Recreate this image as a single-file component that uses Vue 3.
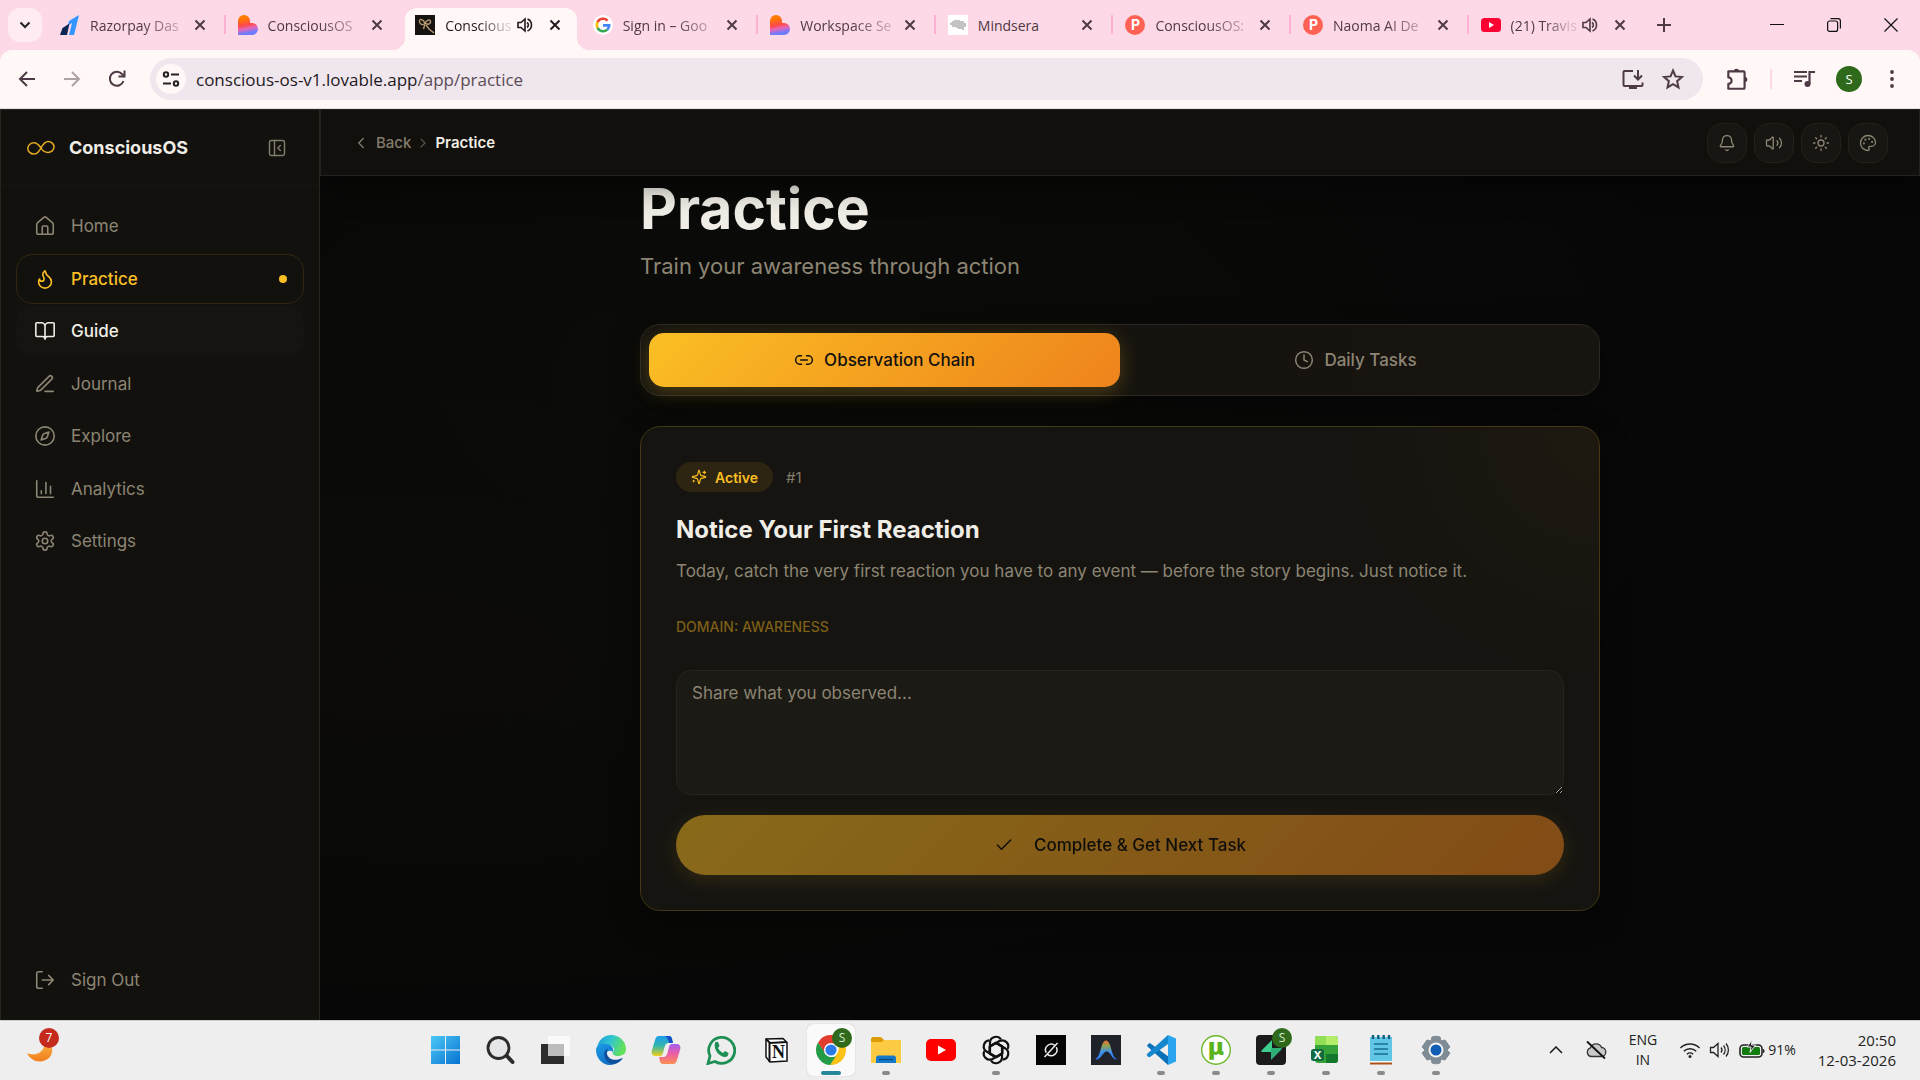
<template>
  <div class="desktop">
    <!-- browser window -->
    <header class="browser">
      <div class="tab-strip">
        <button class="tab-search" aria-label="Search tabs">
          <svg width="12" height="12" viewBox="0 0 12 12" fill="none" stroke="currentColor" stroke-width="2"><path d="M1.5 3.5 6 8l4.5-4.5" /></svg>
        </button>
        <div class="tabs">
          <div
            v-for="(tab, i) in tabs"
            :key="i"
            class="tab"
            :class="{ active: i === activeTab, divided: i !== activeTab && i !== activeTab + 1 && i > 0 }"
            @click="activeTab = i"
          >
            <svg class="favicon" width="20" height="20" viewBox="0 0 20 20" v-html="favicons[tab.icon]" />
            <span class="tab-title" :class="{ faded: tab.title !== 'Mindsera' }">{{ tab.title }}</span>
            <svg v-if="tab.audio" class="tab-audio" width="16" height="16" viewBox="0 0 16 16" v-html="glyphs.audio" />
            <button class="tab-close" aria-label="Close tab">
              <svg width="12" height="12" viewBox="0 0 12 12" stroke="currentColor" stroke-width="2"><path d="m1.5 1.5 9 9m0-9-9 9" /></svg>
            </button>
          </div>
        </div>
        <button class="new-tab" aria-label="New tab">
          <svg width="14" height="14" viewBox="0 0 14 14" stroke="currentColor" stroke-width="2"><path d="M7 0v14M0 7h14" /></svg>
        </button>
        <div class="window-controls">
          <button aria-label="Minimize"><svg width="14" height="14" viewBox="0 0 14 14" fill="none" stroke="#111"><path d="M0 6.5h14" /></svg></button>
          <button aria-label="Restore"><svg width="14" height="14" viewBox="0 0 14 14" fill="none" stroke="#111" stroke-width="1.2"><rect x=".6" y="3" width="10" height="10.4" rx="2" /><path d="M3.5.6H11a2.4 2.4 0 0 1 2.4 2.4v7.5" /></svg></button>
          <button aria-label="Close"><svg width="14" height="14" viewBox="0 0 14 14" fill="none" stroke="#111" stroke-width="1.2"><path d="m.5.5 13 13m0-13-13 13" /></svg></button>
        </div>
      </div>

      <div class="toolbar">
        <button class="tool" aria-label="Back"><svg width="20" height="20" viewBox="0 0 20 20" v-html="glyphs.back" /></button>
        <button class="tool faded" aria-label="Forward"><svg width="20" height="20" viewBox="0 0 20 20" v-html="glyphs.forward" /></button>
        <button class="tool" aria-label="Reload"><svg width="20" height="20" viewBox="0 0 20 20" v-html="glyphs.reload" /></button>
        <div class="address">
          <button class="site-info" aria-label="Site information"><svg width="18" height="18" viewBox="0 0 18 18" v-html="glyphs.tune" /></button>
          <a class="url" href="#"><span>conscious-os-v1.lovable.app</span>/app/practice</a>
          <button class="tool-sm" aria-label="Install"><svg width="24" height="24" viewBox="0 0 24 24" v-html="glyphs.install" /></button>
          <button class="tool-sm" aria-label="Bookmark"><svg width="24" height="24" viewBox="0 0 24 24" v-html="glyphs.star" /></button>
        </div>
        <div class="tool-group">
          <button class="tool" aria-label="Extensions"><svg width="26" height="26" viewBox="0 0 24 24" v-html="glyphs.puzzle" /></button>
          <span class="tool-divider" />
          <button class="tool" aria-label="Media"><svg width="24" height="24" viewBox="0 0 24 24" v-html="glyphs.media" /></button>
          <button class="profile">S</button>
          <button class="tool" aria-label="Menu"><svg width="20" height="20" viewBox="0 0 20 20" v-html="glyphs.dots" /></button>
        </div>
      </div>
    </header>

    <!-- app -->
    <div class="app">
      <aside class="sidebar">
        <div class="brand">
          <svg width="28" height="16" viewBox="0 0 28 16" fill="none" stroke="#e5ab1f" stroke-width="1.5">
            <path d="M14 8C11.500 4.500 10 2.800 7 2.800A6 5.400 0 0 0 7 14C10.500 14 12 11.500 14 8S17.500 1.500 21 1.500A6 5.500 0 0 1 21 12.500C18 12.500 16 11.500 14 8Z" />
          </svg>
          <strong>ConsciousOS</strong>
          <button aria-label="Collapse sidebar">
            <svg class="line" width="20" height="20" viewBox="0 0 24 24" v-html="glyphs.panel" />
          </button>
        </div>
        <nav class="nav">
          <a
            v-for="item in navItems"
            :key="item.name"
            href="#"
            class="nav-item"
            :class="{ current: item.name === 'Practice', hovered: item.name === 'Guide' }"
          >
            <svg class="line" width="22" height="22" viewBox="0 0 24 24" v-html="glyphs[item.icon]" />
            <span>{{ item.name }}</span>
            <i v-if="item.name === 'Practice'" class="dot" />
          </a>
        </nav>
        <a href="#" class="nav-item sign-out">
          <svg class="line" width="22" height="22" viewBox="0 0 24 24" v-html="glyphs.logout" />
          <span>Sign Out</span>
        </a>
      </aside>

      <div class="page">
        <div class="page-header">
          <nav class="crumbs">
            <a href="#"><svg class="line" width="18" height="18" viewBox="0 0 24 24"><path d="m15 18-6-6 6-6" /></svg>Back</a>
            <svg class="line crumb-sep" width="16" height="16" viewBox="0 0 24 24"><path d="m9 18 6-6-6-6" /></svg>
            <b>Practice</b>
          </nav>
          <div class="actions">
            <button v-for="a in actions" :key="a" :aria-label="a">
              <svg class="line" width="18" height="18" viewBox="0 0 24 24" v-html="glyphs[a]" />
            </button>
          </div>
        </div>

        <main class="content">
          <h1>Practice</h1>
          <p class="subtitle">Train your awareness through action</p>

          <div class="switcher">
            <button :class="{ on: mode === 'chain' }" @click="mode = 'chain'">
              <svg class="line" width="20" height="20" viewBox="0 0 24 24" v-html="glyphs.link" />Observation Chain
            </button>
            <button :class="{ on: mode === 'daily' }" @click="mode = 'daily'">
              <svg class="line" width="20" height="20" viewBox="0 0 24 24" v-html="glyphs.clock" />Daily Tasks
            </button>
          </div>

          <section class="card">
            <div class="card-meta">
              <span class="badge"><svg class="line" width="16" height="16" viewBox="0 0 24 24" v-html="glyphs.sparkles" />Active</span>
              <span class="number">#1</span>
            </div>
            <h2>Notice Your First Reaction</h2>
            <p class="description">Today, catch the very first reaction you have to any event — before the story begins. Just notice it.</p>
            <p class="domain">DOMAIN: AWARENESS</p>
            <textarea v-model="note" aria-label="Observation" placeholder="Share what you observed..." />
            <button class="complete" :disabled="!note">
              <svg class="line" width="20" height="20" viewBox="0 0 24 24"><path d="M20 6 9 17l-5-5" /></svg>
              Complete &amp; Get Next Task
            </button>
          </section>
        </main>
      </div>
    </div>

    <!-- taskbar -->
    <footer class="taskbar">
      <div class="widgets">
        <button class="weather" aria-label="Weather">
          <svg width="32" height="32" viewBox="0 0 32 32"><defs><linearGradient id="moon" x1="0" y1="0" x2="0" y2="1"><stop stop-color="#ffc04a" /><stop offset="1" stop-color="#ef7d1c" /></linearGradient></defs><path d="M19 4c10 6 10 15 5 20-7 6-18 4-22-5 7 3 13 1 16-4 2-4 2-7 1-11Z" fill="url(#moon)" /></svg>
          <span>7</span>
        </button>
      </div>
      <div class="pinned">
        <button
          v-for="p in pinned"
          :key="p.name"
          class="pin"
          :class="{ running: p.running, focused: p.name === 'chrome' }"
          :aria-label="p.name"
        >
          <svg width="30" height="30" viewBox="0 0 30 30" v-html="programs[p.name]" />
          <span v-if="p.badge" class="pin-badge">S</span>
        </button>
      </div>
      <div class="tray">
        <svg width="14" height="8" viewBox="0 0 14 8" fill="none" stroke="#222" stroke-width="1.600"><path d="m1 7 6-6 6 6" /></svg>
        <svg width="22" height="20" viewBox="0 0 22 20" fill="none" stroke="#333" stroke-width="1.300"><path d="M6 16.500h10a4.500 4.500 0 0 0 .6-9A6 6 0 0 0 5.500 7.800 4.500 4.500 0 0 0 6 16.500Z" fill="#c9c9c9" /><path d="m2 1.500 18 17" stroke="#111" stroke-width="1.800" /></svg>
        <div class="language"><span>ENG</span><span>IN</span></div>
        <div class="status">
          <svg width="22" height="18" viewBox="0 0 22 18" fill="none" stroke="#222" stroke-width="1.500"><path d="M1.500 7a13.500 13.500 0 0 1 19 0M4.800 10.200a8.800 8.800 0 0 1 12.400 0M8 13.200a4.300 4.300 0 0 1 6 0" /><circle cx="11" cy="15.500" r="1.500" fill="#222" stroke="none" /></svg>
          <svg width="22" height="18" viewBox="0 0 22 18" fill="none" stroke="#222" stroke-width="1.300"><path d="M1.500 6.500h3L9 2.500v13l-4.500-4h-3ZM12 6.500a4 4 0 0 1 0 5M14.500 4.500a7 7 0 0 1 0 9M17 2.500a10 10 0 0 1 0 13" /></svg>
          <div class="battery">
            <svg width="26" height="20" viewBox="0 0 26 20" fill="none"><rect x="1" y="5" width="22" height="12" rx="3.500" stroke="#222" stroke-width="1.600" /><rect x="3" y="7" width="18" height="8" rx="1.500" fill="#107c10" /><path d="M24 9c2 0 2 4 0 4Z" fill="#222" /><path d="M13 0 8 7h4l-1 5.500L16.500 5h-4Z" fill="#222" stroke="#eee" /></svg>
            <span>91%</span>
          </div>
        </div>
        <div class="clock"><span>20:50</span><span>12-03-2026</span></div>
      </div>
    </footer>
  </div>
</template>

<script setup>
import { ref } from 'vue'

const activeTab = ref(2)
const mode = ref('chain')
const note = ref('')

const tabs = [
  { icon: 'razorpay', title: 'Razorpay Das' },
  { icon: 'lovable', title: 'ConsciousOS' },
  { icon: 'conscious', title: 'Conscious', audio: true },
  { icon: 'google', title: 'Sign in – Goo' },
  { icon: 'lovable', title: 'Workspace Se' },
  { icon: 'mindsera', title: 'Mindsera' },
  { icon: 'producthunt', title: 'ConsciousOS:' },
  { icon: 'producthunt', title: 'Naoma AI De' },
  { icon: 'youtube', title: '(21) Travis', audio: true },
]

const navItems = [
  { name: 'Home', icon: 'home' },
  { name: 'Practice', icon: 'flame' },
  { name: 'Guide', icon: 'book' },
  { name: 'Journal', icon: 'pen' },
  { name: 'Explore', icon: 'compass' },
  { name: 'Analytics', icon: 'chart' },
  { name: 'Settings', icon: 'gear' },
]

const actions = ['bell', 'volume', 'sun', 'palette']

const pinned = [
  { name: 'windows' },
  { name: 'search' },
  { name: 'taskview' },
  { name: 'edge' },
  { name: 'copilot' },
  { name: 'whatsapp' },
  { name: 'notion' },
  { name: 'chrome', running: true, badge: true },
  { name: 'explorer', running: true },
  { name: 'youtube' },
  { name: 'chatgpt', running: true },
  { name: 'grok' },
  { name: 'antigravity' },
  { name: 'vscode', running: true },
  { name: 'utorrent', running: true },
  { name: 'supabase', running: true, badge: true },
  { name: 'excel', running: true },
  { name: 'notepad', running: true },
  { name: 'settings', running: true },
]

const heart = '<defs><linearGradient id="lov" x1=".3" y1="0" x2=".5" y2="1"><stop offset=".15" stop-color="#ff7a00"/><stop offset=".5" stop-color="#ff4a4a"/><stop offset=".68" stop-color="#e566b8"/><stop offset=".9" stop-color="#6f7bff"/></linearGradient></defs><path d="M0 6a6 6 0 0 1 12 0v2h2a6 6 0 0 1 0 12H0Z" fill="url(#lov)"/>'
const hunt = '<circle cx="10" cy="10" r="10" fill="#ff6154"/><text x="10.500" y="15" text-anchor="middle" font-family="Inter, sans-serif" font-size="14" font-weight="700" fill="#fff">P</text>'

const favicons = {
  razorpay: '<path d="M9 6 19 0l-5 20h-5l3-12-4 2.500Z" fill="#3395ff"/><path d="m2.500 13 7-4.500L7 20H0Z" fill="#072654"/>',
  lovable: heart,
  conscious: '<path d="M0 0h20v20H0Z" fill="#15120f"/><path d="M10 9C9 4 4 3 4.500 6.500s4 4 5.500 1.500 5-4.500 5.500-1.500-4.500 4-5.500.5M10 9l-1.500 5M11 10l3 4 5 4" fill="none" stroke="#b99a72" stroke-width="1.400"/>',
  google: '<circle cx="10" cy="10" r="10" fill="#fff"/><g fill="none" stroke-width="2.600"><path d="M14.600 5.600A6.300 6.300 0 0 0 4.500 7.200" stroke="#ea4335"/><path d="M4.500 7.200a6.300 6.300 0 0 0 0 5.600" stroke="#fbbc05"/><path d="M4.500 12.800a6.300 6.300 0 0 0 9.700 2" stroke="#34a853"/><path d="M14.200 14.800a6.300 6.300 0 0 0 2-4.400H10" stroke="#4285f4"/></g>',
  mindsera: '<path d="M0 0h20v20H0Z" fill="#fff"/><path d="M3 10V7.500M5 12V6M7 12V5M9 13V5M11 14V5M13 14V6M15 15V6M17 12V8" stroke="#b9b9b9" stroke-width="1.700"/>',
  producthunt: hunt,
  youtube: '<rect y="3" width="20" height="14" rx="3.500" fill="#ff0033"/><path d="m8 7 5 3-5 3Z" fill="#fff"/>',
}

const line = 'fill="none" stroke="currentColor" stroke-width="2"'

const glyphs = {
  audio: '<path d="M1 5.500h3L8 2v12l-4-3.500H1Z" fill="none" stroke="currentColor" stroke-width="1.600"/><path d="M10 5.500a3 3 0 0 1 0 5M10.500 2a6.500 6.500 0 0 1 0 12" fill="none" stroke="currentColor" stroke-width="1.600"/>',
  back: `<path d="M18 10H3m7-7-7 7 7 7" ${line}/>`,
  forward: `<path d="M2 10h15m-7-7 7 7-7 7" ${line}/>`,
  reload: `<path d="M16.500 12A7 7 0 1 1 15 5l2 2" ${line}/><path d="M17.500 1.500v6h-6" ${line}/>`,
  tune: `<g ${line}><circle cx="4" cy="4.500" r="2.200"/><path d="M9 4.500h8M1 13.500h8"/><circle cx="14" cy="13.500" r="2.200"/></g>`,
  install: `<path d="M12 4H3.500a1 1 0 0 0-1 1v13a1 1 0 0 0 1 1h17a1 1 0 0 0 1-1v-2.500M17 3v9m-4-3.500 4 4 4-4" ${line}/><path d="M8 19h8v3H8Z" fill="currentColor"/>`,
  star: `<path d="m12 3.500 2.500 5.900 6.400.6-4.800 4.200 1.400 6.200-5.500-3.300-5.500 3.300 1.400-6.200L3.100 10l6.400-.6Z" ${line}/>`,
  puzzle: `<path d="M4 5h14a1 1 0 0 1 1 1v14a1 1 0 0 1-1 1H4v-4.500a3 3 0 0 0 0-6Z" ${line} stroke-linejoin="round"/><path d="M9 5a2.500 2.500 0 0 1 5 0ZM19 10a2.500 2.500 0 0 1 0 5Z" fill="currentColor"/>`,
  media: '<path d="M2 5h13M2 9.500h13M2 14h8M17.500 17V5H23" fill="none" stroke="currentColor" stroke-width="2.200"/><circle cx="15.500" cy="17" r="3" fill="currentColor"/>',
  dots: '<g fill="currentColor"><circle cx="10" cy="3" r="1.900"/><circle cx="10" cy="10" r="1.900"/><circle cx="10" cy="17" r="1.900"/></g>',
  panel: '<rect x="3" y="3" width="18" height="18" rx="2"/><path d="M9 3v18m7-6-3-3 3-3"/>',
  home: '<path d="M15 21v-8a1 1 0 0 0-1-1h-4a1 1 0 0 0-1 1v8"/><path d="M3 10a2 2 0 0 1 .709-1.528l7-5.999a2 2 0 0 1 2.582 0l7 5.999A2 2 0 0 1 21 10v9a2 2 0 0 1-2 2H5a2 2 0 0 1-2-2z"/>',
  flame: '<path d="M8.500 14.500A2.500 2.500 0 0 0 11 12c0-1.380-.5-2-1-3-1.072-2.143-.224-4.054 2-6 .5 2.500 2 4.900 4 6.500 2 1.600 3 3.500 3 5.500a7 7 0 1 1-14 0c0-1.153.433-2.294 1-3a2.500 2.500 0 0 0 2.500 2.500z"/>',
  book: '<path d="M12 7v14M3 18a1 1 0 0 1-1-1V4a1 1 0 0 1 1-1h5a4 4 0 0 1 4 4 4 4 0 0 1 4-4h5a1 1 0 0 1 1 1v13a1 1 0 0 1-1 1h-6a3 3 0 0 0-3 3 3 3 0 0 0-3-3z"/>',
  pen: '<path d="M12 20h9M16.376 3.622a1 1 0 0 1 3.002 3.002L7.368 18.635a2 2 0 0 1-.855.506l-2.872.838a.5.5 0 0 1-.62-.62l.838-2.872a2 2 0 0 1 .506-.854z"/>',
  compass: '<path d="m16.240 7.760-1.804 5.411a2 2 0 0 1-1.265 1.265L7.760 16.240l1.804-5.411a2 2 0 0 1 1.265-1.265z"/><circle cx="12" cy="12" r="10"/>',
  chart: '<path d="M3 3v16a2 2 0 0 0 2 2h16M18 17V9M13 17V5M8 17v-3"/>',
  gear: '<path d="M12.220 2h-.44a2 2 0 0 0-2 2v.18a2 2 0 0 1-1 1.730l-.43.25a2 2 0 0 1-2 0l-.15-.08a2 2 0 0 0-2.730.73l-.22.38a2 2 0 0 0 .73 2.730l.15.1a2 2 0 0 1 1 1.720v.51a2 2 0 0 1-1 1.740l-.15.09a2 2 0 0 0-.73 2.730l.22.38a2 2 0 0 0 2.730.73l.15-.08a2 2 0 0 1 2 0l.43.25a2 2 0 0 1 1 1.730V20a2 2 0 0 0 2 2h.44a2 2 0 0 0 2-2v-.18a2 2 0 0 1 1-1.730l.43-.25a2 2 0 0 1 2 0l.15.08a2 2 0 0 0 2.730-.73l.22-.39a2 2 0 0 0-.73-2.730l-.15-.08a2 2 0 0 1-1-1.740v-.5a2 2 0 0 1 1-1.740l.15-.09a2 2 0 0 0 .73-2.730l-.22-.38a2 2 0 0 0-2.730-.73l-.15.08a2 2 0 0 1-2 0l-.43-.25a2 2 0 0 1-1-1.730V4a2 2 0 0 0-2-2z"/><circle cx="12" cy="12" r="3"/>',
  logout: '<path d="M9 21H5a2 2 0 0 1-2-2V5a2 2 0 0 1 2-2h4M16 17l5-5-5-5M21 12H9"/>',
  bell: '<path d="M10.300 21a1.940 1.940 0 0 0 3.400 0M3.262 15.326A1 1 0 0 0 4 17h16a1 1 0 0 0 .740-1.673C19.410 13.956 18 12.499 18 8A6 6 0 0 0 6 8c0 4.499-1.411 5.956-2.738 7.326"/>',
  volume: '<path d="M11 4.702a.705.705 0 0 0-1.203-.498L6.413 7.587A1.400 1.400 0 0 1 5.416 8H3a1 1 0 0 0-1 1v6a1 1 0 0 0 1 1h2.416a1.400 1.400 0 0 1 .997.413l3.383 3.384A.705.705 0 0 0 11 19.298zM16 9a5 5 0 0 1 0 6M19.364 18.364a9 9 0 0 0 0-12.728"/>',
  sun: '<circle cx="12" cy="12" r="4"/><path d="M12 2v2M12 20v2M4.930 4.930l1.410 1.410M17.660 17.660l1.410 1.410M2 12h2M20 12h2M6.340 17.660l-1.410 1.410M19.070 4.930l-1.410 1.410"/>',
  palette: '<g fill="currentColor"><circle cx="13.500" cy="6.500" r=".5"/><circle cx="17.500" cy="10.500" r=".5"/><circle cx="8.500" cy="7.500" r=".5"/><circle cx="6.500" cy="12.500" r=".5"/></g><path d="M12 2C6.500 2 2 6.500 2 12s4.500 10 10 10c.926 0 1.648-.746 1.648-1.688 0-.437-.18-.835-.437-1.125-.29-.289-.438-.652-.438-1.125a1.640 1.640 0 0 1 1.668-1.668h1.996c3.051 0 5.555-2.503 5.555-5.554C21.965 6.012 17.461 2 12 2z"/>',
  link: '<path d="M9 17H7A5 5 0 0 1 7 7h2M15 7h2a5 5 0 1 1 0 10h-2M8 12h8"/>',
  clock: '<circle cx="12" cy="12" r="10"/><path d="M12 6v6l4 2"/>',
  sparkles: '<path d="M9.937 15.500A2 2 0 0 0 8.500 14.063l-6.135-1.582a.5.5 0 0 1 0-.962L8.500 9.936A2 2 0 0 0 9.937 8.500l1.582-6.135a.5.5 0 0 1 .963 0L14.063 8.500A2 2 0 0 0 15.500 9.937l6.135 1.581a.5.5 0 0 1 0 .964L15.500 14.063a2 2 0 0 0-1.437 1.437l-1.582 6.135a.5.5 0 0 1-.963 0zM20 3v4M22 5h-4M4 17v2M5 18H3"/>',
}

const programs = {
  windows: '<defs><linearGradient id="win" x1="0" y1="0" x2="1" y2="1"><stop stop-color="#4cc9f8"/><stop offset="1" stop-color="#0672d0"/></linearGradient></defs><path d="M0 1h14v13.500H0ZM15 1h14v13.500H15ZM0 15.500h14V29H0ZM15 15.500h14V29H15Z" fill="url(#win)"/>',
  search: '<circle cx="12.500" cy="13" r="10.500" fill="#e4e6e8" stroke="#2b2b2b" stroke-width="2.800"/><path d="m21 21 5.500 6" stroke="#2b2b2b" stroke-width="4" stroke-linecap="round"/>',
  taskview: '<path d="M0 9h23v20H0Z" fill="#2c2c2c"/><path d="M7 1h22v20H7Z" fill="#fafafa"/><path d="M7 9h16v12H7Z" fill="#bdbdbd"/>',
  edge: '<defs><linearGradient id="ed1" x1="0" y1="0" x2="1" y2=".3"><stop stop-color="#1c96d8"/><stop offset=".5" stop-color="#31c5d3"/><stop offset="1" stop-color="#62e05a"/></linearGradient><linearGradient id="ed2" x1="0" y1="0" x2="1" y2="1"><stop stop-color="#1c9ee8"/><stop offset="1" stop-color="#0b5bb4"/></linearGradient></defs><path d="M1 12C3 4 9 0 15 0c9 0 15 7 15 14 0 5-4 7-8 7-4 0-6-2-5-4 2-2 1-6-4-7-5-1-9 0-12 2Z" fill="url(#ed1)"/><path d="M0 15c0-4 5-7 10-6 5 0 8 4 7 8-3-3-8 0-7 4s7 7 16 2c-2 4-7 7-12 7C6 30 0 23 0 15Z" fill="url(#ed2)"/><path d="M12 13c-6 3-5 13 4 16 5 0 9-3 11-6-8 4-15 1-16-4-.5-3 0-4 1-6Z" fill="#0d4f9c"/>',
  copilot: '<defs><linearGradient id="co1" x1="0" y1="0" x2="0" y2="1"><stop stop-color="#1b9cf0"/><stop offset=".5" stop-color="#35b6a8"/><stop offset="1" stop-color="#f0d01b"/></linearGradient><linearGradient id="co2" x1="0" y1="0" x2="0" y2="1"><stop stop-color="#a35cf0"/><stop offset=".5" stop-color="#ee5fa1"/><stop offset="1" stop-color="#fb9150"/></linearGradient></defs><path d="M8 1h10c3 0 3 3 4 7h-4c-3 0-4 2-5 6l-1 4c-1 3-2 3-4 3H4c-3 0-4-3-3-6L4 5c1-3 2-4 4-4Z" fill="url(#co1)"/><path d="M22 29H12c-3 0-3-3-4-7h4c3 0 4-2 5-6l1-4c1-3 2-3 4-3h4c3 0 4 3 3 6l-3 10c-1 3-2 4-4 4Z" fill="url(#co2)"/><path d="M14 1h4c3 0 3 3 4 7h-4c-1-4-2-6-4-7Z" fill="#1650c9"/>',
  whatsapp: '<path d="M2 28.500 4 21A13 13 0 1 1 9 26.500Z" fill="#eee" stroke="#1e9055" stroke-width="2.800"/><path d="M9 8c1-2 3-1 3.500 0l1 3-1.500 2c1 2 3 4 5 5l2-2 3.500 2c0 2-1 4-3.500 4C14 22 7 15 9 8Z" fill="#1e9055"/>',
  notion: '<path d="m5 4 17-.5 4 4V26L9 27l-4-5Z" fill="#fff" stroke="#111" stroke-width="1.500"/><path d="m5 4 4 4 17-1M8.500 8v19" fill="none" stroke="#111" stroke-width="2"/><text x="17.500" y="23" text-anchor="middle" font-family="Liberation Serif, serif" font-size="18" font-weight="700" fill="#111">N</text>',
  chrome: '<circle cx="15" cy="15" r="15" fill="#fff"/><path d="M2 7.500A15 15 0 0 1 28 7.500L28.500 9H15L8.500 18Z" fill="#e33b2e"/><path d="M28.500 8.500A15 15 0 0 1 14 30L21 18a7 7 0 0 0 0-9.500Z" fill="#fbc116"/><path d="M2 7.500A15 15 0 0 0 14 30l6-9c-3 2-8 1-11-3Z" fill="#249b46"/><circle cx="15" cy="15" r="7" fill="#fff"/><circle cx="15" cy="15" r="5.600" fill="#2c79e8"/>',
  explorer: '<path d="M0 4c0-1 1-2 2-2h8l3 3v5H0Z" fill="#dc9c07"/><path d="M0 7h11l2-2h17v23H0Z" fill="#fdca43"/><path d="M5 28v-5c0-1.500 1-2.500 2.500-2.500h15c1.500 0 2.500 1 2.500 2.500v5Z" fill="#1479c9"/><path d="M8 24.500h14" stroke="#0b4c86" stroke-width="1.300"/>',
  youtube: '<rect y="4" width="30" height="22" rx="5" fill="#f00"/><path d="m12 10.500 8 4.500-8 4.500Z" fill="#fff"/>',
  chatgpt: '<g fill="none" stroke="#111" stroke-width="2.200" stroke-linejoin="round">' + [0, 60, 120, 180, 240, 300].map((a) => `<path transform="rotate(${a} 15 15)" d="M9 18.500V7.500a6 6 0 0 1 11-3M9.500 11l5.500-3.200 6.500 3.700"/>`).join('') + '</g>',
  grok: '<path d="M0 0h30v30H0Z" fill="#050505"/><path d="M19 10.500a5.800 5.800 0 0 0-8.800 7.200M11.500 19.300a5.800 5.800 0 0 0 8.800-7.200M8.500 22 21.500 8" fill="none" stroke="#eee" stroke-width="1.500"/>',
  antigravity: '<defs><linearGradient id="ag" x1="0" y1="0" x2="0" y2="1"><stop stop-color="#f07031"/><stop offset=".3" stop-color="#8aa253"/><stop offset=".6" stop-color="#3f91e8"/><stop offset="1" stop-color="#2f73f2"/></linearGradient></defs><path d="M0 0h30v30H0Z" fill="#202229"/><path d="M4 24c4-1 5-8 7-14 2-6 6-6 8 0s3 13 7 14c-4 2-6-6-9-7-2-1-3 0-4 1-3 3-5 8-9 6Z" fill="url(#ag)"/>',
  vscode: '<path d="M22 0v30L1.500 11.500c-1-1 1.500-4 3-3L23 22Z" fill="#0a70b8"/><path d="M22 0v9L4 22c-1.500 1-4-2-3-3Z" fill="#1587cf"/><path d="m22 0 8 3.500v23L22 30Z" fill="#2aa4ef"/>',
  utorrent: '<circle cx="15" cy="15" r="14.300" fill="#fff" stroke="#6cb62c" stroke-width="1.400"/><text x="15" y="20" text-anchor="middle" font-family="Inter, sans-serif" font-size="23" font-weight="900" fill="#5bb31b">µ</text>',
  supabase: '<rect width="30" height="30" rx="4" fill="#1b1b1b"/><path d="M16 5v12H6c-1 0-1-1 0-2Z" fill="#3ecf8e"/><path d="M15 25V13h10c1 0 1 1 0 2Z" fill="#2fae78"/>',
  excel: '<rect x="4" y="1" width="23" height="27" rx="3" fill="#35a33a"/><path d="M7 1h10v9H4V4c0-2 1-3 3-3Z" fill="#90df55"/><path d="M15 1h9c2 0 3 1 3 3v6H15Z" fill="#b4ed69"/><path d="M15 19h12v6c0 2-1 3-3 3h-9Z" fill="#14782c"/><rect y="14" width="13" height="12" rx="2.500" fill="#126b40"/><text x="6.500" y="24" text-anchor="middle" font-family="Inter, sans-serif" font-size="11" font-weight="700" fill="#fff">X</text>',
  notepad: '<path d="M4 2h22v25H4Z" fill="#61c6e5"/><path d="M4 26h22v3.500H4Z" fill="#a9531b"/><path d="M4 26h22v1.500H4Z" fill="#fff"/><path d="M7 0v4M12.300 0v4M17.700 0v4M23 0v4" stroke="#145c7c" stroke-width="2.400"/><path d="M8 9h14M8 14h14M8 19h14" stroke="#176d93" stroke-width="1.600"/>',
  settings: '<path d="M11 2c3-1 5-1 8 0l1 4 4-1 5 7-3 3 3 3-5 7-4-1-1 4c-3 1-5 1-8 0l-1-4-4 1-5-7 3-3-3-3 5-7 4 1Z" fill="#7f8b95" stroke="#7f8b95" stroke-linejoin="round"/><circle cx="15" cy="15" r="7.500" fill="#f3f3f3"/><circle cx="15" cy="15" r="5.500" fill="#0f5db5"/>',
}
</script>

<style>
body {
  margin: 0;
  background: #070707;
}
</style>

<style scoped>
* {
  box-sizing: border-box;
}

.desktop {
  min-height: 100vh;
  display: flex;
  flex-direction: column;
  font-family: Inter, 'Open Sans', sans-serif;
  color: #f0ede6;
}

button {
  border: none;
  background: none;
  padding: 0;
  font: inherit;
  color: inherit;
  display: flex;
  align-items: center;
  justify-content: center;
  cursor: pointer;
}

a {
  color: inherit;
  text-decoration: none;
}

svg {
  flex: none;
  display: block;
}

.line {
  fill: none;
  stroke: currentColor;
  stroke-width: 1.75;
  stroke-linecap: round;
  stroke-linejoin: round;
}

/* Browser */
.browser {
  background: #fdd8e6;
  color: #4d3a44;
  font-family: 'Open Sans', 'Noto Sans', sans-serif;
  border-bottom: 1px solid #e8d9de;
}

.tab-strip {
  height: 50px;
  display: flex;
  align-items: stretch;
}

.tab-search {
  width: 34px;
  height: 34px;
  margin: 8px;
  border-radius: 12px;
  background: #ffebf2;
  color: #222;
}

.tabs {
  flex: 0 1 1598px;
  min-width: 0;
  display: flex;
}

.tab {
  flex: 1 1 0;
  min-width: 0;
  position: relative;
  display: flex;
  align-items: center;
  margin-top: 8px;
  padding: 0 22px 8px 10px;
  border-radius: 12px 12px 0 0;
  font-size: 14px;
}

.tab.divided::before {
  content: '';
  position: absolute;
  left: -4px;
  top: 7px;
  width: 2px;
  height: 19px;
  background: #ffb0d4;
}

.tab.active {
  background: #fff8f7;
  color: #221a1e;
  margin-right: 6px;
  padding-right: 16px;
}

.tab.active::before,
.tab.active::after {
  content: '';
  position: absolute;
  bottom: 0;
  width: 12px;
  height: 12px;
  background: radial-gradient(circle at 0 0, transparent 12px, #fff8f7 12px);
}

.tab.active::before {
  left: -12px;
}

.tab.active::after {
  right: -12px;
  background: radial-gradient(circle at 100% 0, transparent 12px, #fff8f7 12px);
}

.tab-title {
  flex: 1;
  min-width: 0;
  margin: 0 0 0 10px;
  white-space: nowrap;
}

.tab-title.faded {
  mask-image: linear-gradient(to right, #000 50%, rgba(0, 0, 0, 0.2) 90%);
}

.tab-audio {
  margin: 0 16px 0 4px;
}

.tab-close {
  width: 12px;
  height: 12px;
}

.new-tab {
  margin-left: 9px;
}

.window-controls {
  flex: 1;
  display: flex;
  justify-content: flex-end;
  gap: 43px;
  padding-right: 22px;
}

.toolbar {
  height: 58px;
  display: flex;
  align-items: center;
  gap: 25px;
  padding: 0 18px 0 17px;
  background: #fff8f7;
  border-radius: 12px 12px 0 0;
}

.tool.faded {
  opacity: 0.45;
}

.address {
  flex: 1;
  height: 42px;
  display: flex;
  align-items: center;
  gap: 16px;
  margin-left: -2px;
  padding: 0 18px 0 6px;
  border-radius: 21px;
  background: #f0e6ed;
}

.site-info {
  width: 30px;
  height: 30px;
  border-radius: 50%;
  background: #fff8f7;
  color: #222;
}

.url {
  flex: 1;
  margin-left: -6px;
  font-size: 17px;
  color: #5a4c55;
}

.url span {
  color: #1f1a1d;
}

.tool-group {
  display: flex;
  align-items: center;
  gap: 20px;
  margin-left: -4px;
}

.tool-divider {
  width: 2px;
  height: 20px;
  background: #fdd8e6;
}

.profile {
  width: 26px;
  height: 26px;
  border-radius: 50%;
  background: #2f6a1c;
  color: #fff;
  font-size: 13px;
}

/* App shell */
.app {
  flex: 1;
  display: flex;
  background:
    radial-gradient(ellipse at 40% 30%, #0b0b09, transparent 60%),
    radial-gradient(ellipse at 20% 60%, #0c0b06, transparent 50%),
    #070707;
}

.sidebar {
  flex: none;
  width: 320px;
  display: flex;
  flex-direction: column;
  background: #12110e;
  border: 1px solid #26241f;
  border-width: 1px 1px 0;
}

.brand {
  height: 76px;
  display: flex;
  align-items: center;
  gap: 14px;
  padding: 0 32px 0 26px;
  border-bottom: 1px solid #161512;
}

.brand strong {
  flex: 1;
  font-size: 18px;
}

.brand button {
  color: #847c6c;
}

.nav {
  height: 365px;
  display: flex;
  flex-direction: column;
  justify-content: space-between;
  margin: 15px 15px auto;
}

.nav-item {
  height: 50px;
  display: flex;
  align-items: center;
  gap: 15px;
  padding: 0 16px 0 17px;
  border: 1px solid transparent;
  border-radius: 16px;
  font-size: 17px;
  color: #8d8573;
}

.nav-item.current {
  border-color: #332710;
  font-weight: 500;
  color: #fbbf24;
}

.nav-item.hovered {
  background: #151411;
  font-weight: 500;
  color: #f0ede6;
}

.dot {
  width: 8px;
  height: 8px;
  margin-left: auto;
  border-radius: 50%;
  background: #fbbf24;
}

.sign-out {
  margin: 0 15px 15px;
}

.page {
  flex: 1;
  min-width: 0;
  overflow: hidden;
}

.page-header {
  position: relative;
  height: 67px;
  display: flex;
  align-items: center;
  justify-content: space-between;
  padding: 0 31px;
  background: #11100d;
  border: 1px solid #24221e;
  box-shadow: 0 8px 30px rgba(0, 0, 0, 0.5);
}

.crumbs,
.crumbs a {
  display: flex;
  align-items: center;
  font-size: 15px;
  font-weight: 500;
  color: #847c6c;
}

.crumbs a {
  gap: 6px;
}

.crumb-sep {
  margin: 0 4px;
  opacity: 0.6;
}

.crumbs b {
  font-weight: 600;
  color: #f0ede6;
}

.actions {
  display: flex;
  gap: 7px;
}

.actions button {
  width: 40px;
  height: 40px;
  border: 1px solid #23211b;
  border-radius: 15px;
  background: #171612;
  color: #8d8573;
}

/* Practice */
.content {
  max-width: 960px;
  margin: 0 auto;
  padding-bottom: 60px;
}

h1,
h2,
p {
  margin: 0;
}

h1 {
  font-size: 57px;
  line-height: 60px;
  padding-top: 3px;
}

.subtitle {
  margin-top: 12px;
  font-size: 22px;
  line-height: 30px;
  color: #8d8573;
}

.switcher {
  display: grid;
  grid-template-columns: 1fr 1fr;
  height: 72px;
  margin-top: 43px;
  padding: 8px;
  border: 1px solid #2b2924;
  border-radius: 20px;
  background: linear-gradient(to right, #14130f, #181410);
  box-shadow: 0 10px 30px rgba(0, 0, 0, 0.4);
}

.switcher button {
  gap: 10px;
  border-radius: 15px;
  font-size: 17px;
  font-weight: 500;
  color: #8d8573;
}

.switcher button.on {
  background: linear-gradient(135deg, #fbbf24, #ee831c);
  color: #14120e;
  box-shadow: 0 5px 20px rgba(251, 191, 36, 0.25);
}

.card {
  display: flex;
  flex-direction: column;
  margin-top: 30px;
  padding: 35px;
  border: 1px solid #453615;
  border-radius: 20px;
  background:
    radial-gradient(circle at 100% 0, #1e1910, transparent 250px),
    #151410;
  box-shadow: 0 10px 30px rgba(0, 0, 0, 0.4);
}

.card-meta {
  display: flex;
  align-items: center;
  gap: 13px;
}

.badge {
  height: 30px;
  display: flex;
  align-items: center;
  gap: 8px;
  padding: 0 15px;
  border-radius: 15px;
  background: #2d2411;
  font-size: 14px;
  font-weight: 600;
  color: #fbbf24;
}

.number {
  font-size: 15px;
  color: #847c6c;
}

h2 {
  margin-top: 20px;
  font-size: 24px;
  line-height: 36px;
}

.description {
  margin-top: 9px;
  font-size: 17px;
  line-height: 28px;
  color: #8d8573;
}

.domain {
  margin-top: 30px;
  font-size: 14px;
  font-weight: 500;
  line-height: 24px;
  color: #7d5f17;
}

textarea {
  height: 125px;
  margin-top: 31px;
  padding: 10px 15px;
  border: 1px solid #25241d;
  border-radius: 15px;
  background: #1b1a14;
  color: #f0ede6;
  font-family: inherit;
  font-size: 17px;
  line-height: 25px;
  resize: vertical;
}

textarea::placeholder {
  color: #8d8573;
}

.complete {
  height: 60px;
  gap: 20px;
  margin-top: 20px;
  border-radius: 30px;
  background: linear-gradient(135deg, #fbbf24, #ee831c);
  box-shadow: 0 5px 20px rgba(251, 191, 36, 0.25);
  font-size: 17px;
  font-weight: 500;
  color: #0c0a06;
}

.complete:disabled {
  opacity: 0.5;
}

/* Taskbar */
.taskbar {
  height: 60px;
  display: flex;
  align-items: center;
  padding-bottom: 2px;
  background: #eee;
  border-top: 1px solid #cfcfcf;
  color: #222;
  font-family: 'Open Sans', 'Noto Sans', sans-serif;
  font-size: 14px;
}

.widgets {
  flex: 0 0 422px;
  padding-left: 25px;
}

.weather {
  position: relative;
}

.weather span {
  position: absolute;
  top: -6px;
  left: 14px;
  width: 20px;
  height: 20px;
  border-radius: 50%;
  background: #c42b1c;
  color: #fff;
  font-size: 12px;
  line-height: 20px;
}

.pinned {
  display: flex;
  gap: 7px;
}

.pin {
  position: relative;
  width: 48px;
  height: 52px;
  border-radius: 6px;
}

.pin.focused {
  background: #fafafa;
  box-shadow: 0 0 1px #aaa;
}

.pin.running::after {
  content: '';
  position: absolute;
  bottom: 1px;
  left: 20px;
  width: 8px;
  height: 4px;
  border-radius: 2px;
  background: #8a8a8a;
}

.pin.focused::after {
  left: 14px;
  width: 20px;
  background: #27889b;
}

.pin-badge {
  position: absolute;
  top: 4px;
  right: 3px;
  width: 20px;
  height: 20px;
  border-radius: 50%;
  background: #2f6a1c;
  color: #d8e8d0;
  font-size: 12px;
  line-height: 20px;
}

.tray {
  display: flex;
  align-items: center;
  margin-left: auto;
  padding-right: 24px;
  gap: 22px;
}

.tray div {
  display: flex;
}

.tray .language,
.tray .clock {
  flex-direction: column;
  align-items: center;
  line-height: 20px;
}

.tray .clock {
  align-items: flex-end;
  font-size: 15px;
}

.tray .status {
  align-items: center;
  gap: 8px;
}

.tray .battery {
  align-items: center;
  gap: 3px;
}
</style>
